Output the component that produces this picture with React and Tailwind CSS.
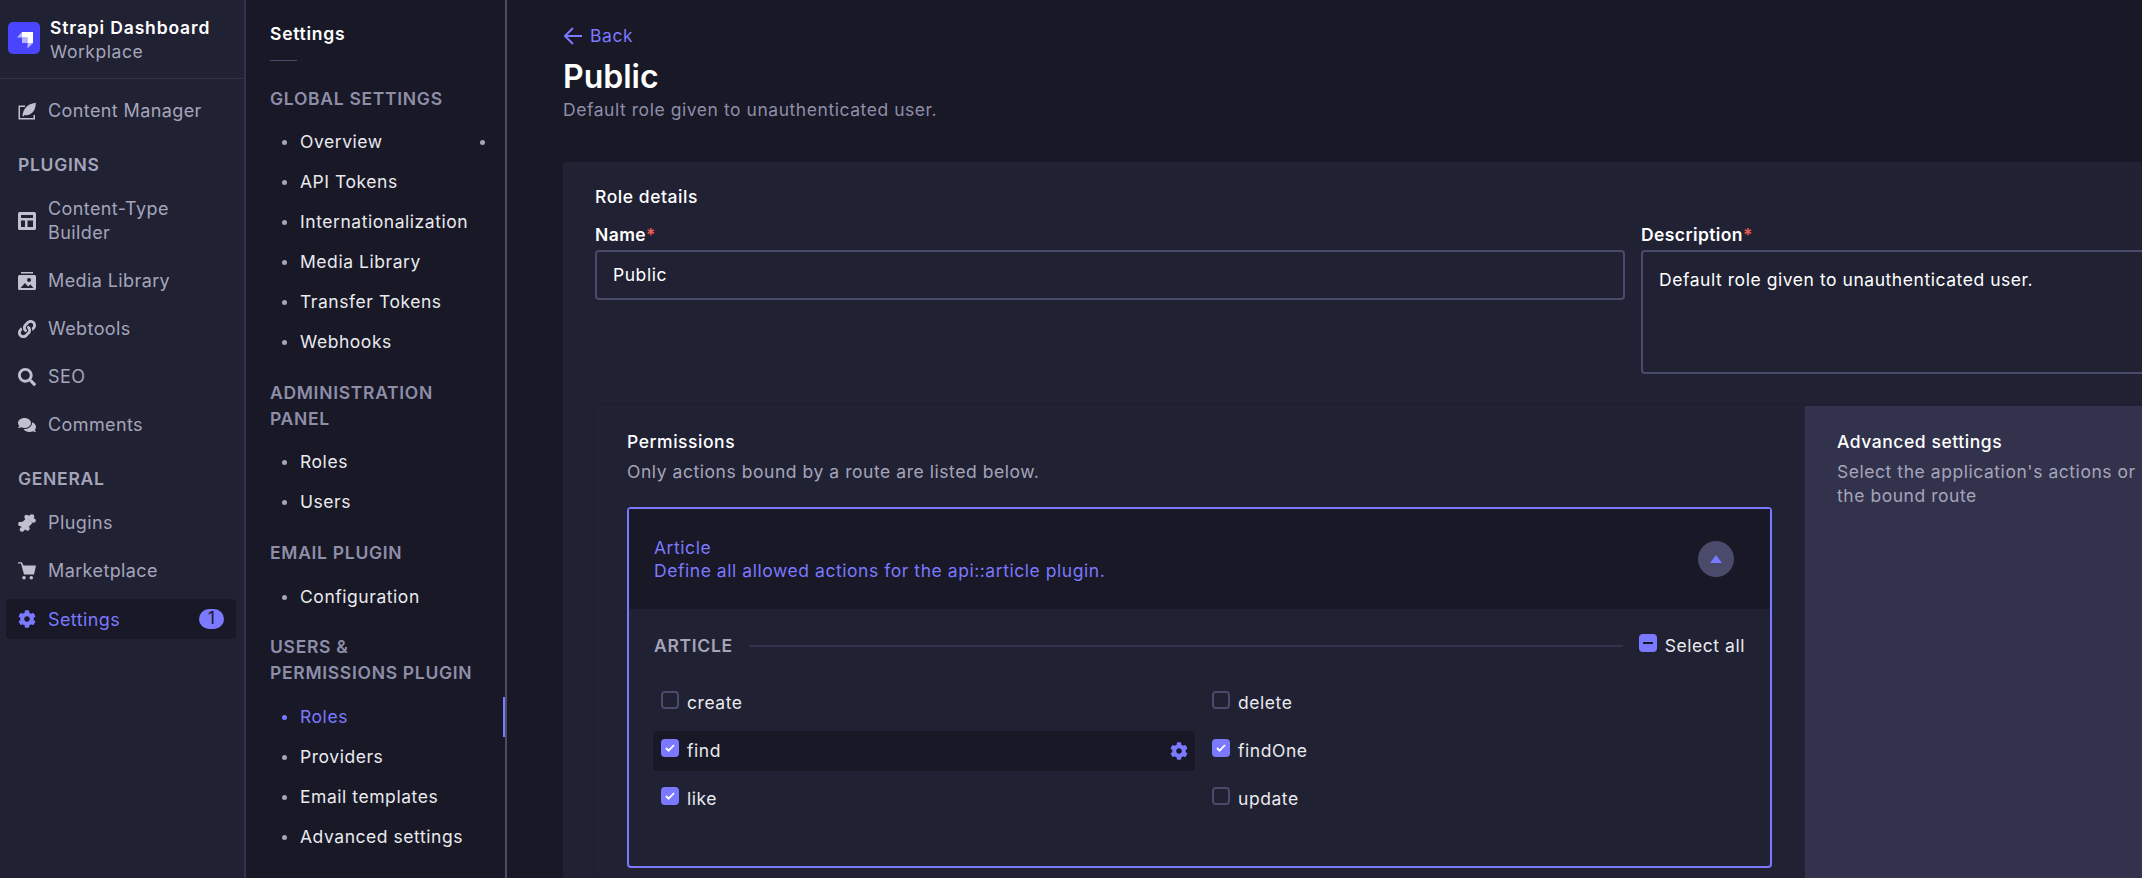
import React from 'react';
import { FaCog, FaComments, FaLink, FaSearch } from 'react-icons/fa';

const WriteIcon = () => (
  <svg viewBox="0 0 18 18" className="w-[18px] h-[18px]" fill="currentColor">
    <path d="M0.500 3.500H7v1.500H2v11h13.500v-3H17v4.500H0.500z" />
    <path d="M4.500 14C4.800 8.500 8 1.800 17.800 0.700 17.800 7 15 13 8 13.200L6 13.200 5.800 14.500z" />
  </svg>
);

const LayoutIcon = () => (
  <svg viewBox="0 0 18 18" className="w-[18px] h-[18px]" fill="currentColor">
    <path fillRule="evenodd" d="M1.500 0h15A1.500 1.500 0 0 1 18 1.500v15a1.500 1.500 0 0 1-1.500 1.500h-15A1.500 1.500 0 0 1 0 16.500v-15A1.500 1.500 0 0 1 1.500 0zM3 3v3h12V3zm0 5.500V15h4V8.500zm6.500 0V15H15V8.500z" />
  </svg>
);

const PictureIcon = () => (
  <svg viewBox="0 0 18 18" className="w-[18px] h-[18px]" fill="currentColor">
    <path d="M3 0h12v1.500H3z" />
    <path fillRule="evenodd" d="M1.500 3h15A1.500 1.500 0 0 1 18 4.500v12a1.500 1.500 0 0 1-1.500 1.500h-15A1.500 1.500 0 0 1 0 16.500v-12A1.500 1.500 0 0 1 1.500 3zM11 6a2 2 0 1 0 0 4 2 2 0 0 0 0-4zM2.500 16h13l-3-3.500-2.500 2-3-3.500z" />
  </svg>
);

const PuzzleIcon = () => (
  <svg viewBox="0 0 18 18" className="w-[18px] h-[18px]" fill="currentColor">
    <path d="M9 3.500l5.500 5.500L9 14.500 3.500 9z" />
    <circle cx="8.500" cy="3" r="2.200" />
    <circle cx="14" cy="2.500" r="2.300" />
    <circle cx="15.500" cy="6.500" r="2.300" />
    <circle cx="2.300" cy="10" r="2.200" />
    <circle cx="4" cy="15.500" r="2.300" />
    <circle cx="9.500" cy="14.500" r="2.200" />
    <path d="M8 2l6-1 2 5-3 2z" />
    <path d="M2 10l3-3 5 7-5 3z" />
  </svg>
);

const CartIcon = () => (
  <svg viewBox="0 0 18 18" className="w-[18px] h-[18px]" fill="currentColor">
    <path d="M0 0.200h3.800L5.500 3.500H18l-2 9H6L3 1.500H0z" />
    <circle cx="6" cy="15.800" r="1.800" />
    <circle cx="13.300" cy="15.800" r="1.800" />
  </svg>
);

const LogoIcon = () => (
  <div className="w-8 h-8 rounded-[5px] bg-[#4945ff] flex items-center justify-center shrink-0">
    <svg viewBox="0 0 32 32" className="w-8 h-8">
      <path d="M14 10h11v11h-5.500v-5.500H14z" fill="#ffffff" />
      <path d="M14 10v5.500H9z" fill="#ffffff" opacity="0.6" />
      <path d="M14 15.500h5.500V21H14z" fill="#ffffff" opacity="0.6" />
      <path d="M19.500 21H25l-5.500 5.500z" fill="#ffffff" opacity="0.6" />
    </svg>
  </div>
);

const Check = ({ checked, minus }) => (
  <span
    className={
      'w-[18px] h-[18px] rounded-[4px] flex items-center justify-center shrink-0 ' +
      (checked || minus ? 'bg-[#7b79ff]' : 'border-2 border-[#4a4a6a]')
    }
  >
    {checked && (
      <svg viewBox="0 0 10 8" className="w-[10px] h-[8px]" fill="none" stroke="#ffffff" strokeWidth="1.800">
        <path d="M1 4l2.600 2.600L9 1" />
      </svg>
    )}
    {minus && <span className="w-[10px] h-[2px] bg-[#181826]"></span>}
  </span>
);

const SideItem = ({ icon, label, tall }) => (
  <div className={'flex items-center gap-3 px-[18px] text-[#a5a5ba] ' + (tall ? 'h-[72px]' : 'h-12')}>
    <span className="w-[18px] flex justify-center shrink-0 text-[#c0c0cf] text-[18px]">{icon}</span>
    <span className="text-[18px] leading-6 w-[170px] tracking-[0.4px]">{label}</span>
  </div>
);

const SideLabel = ({ children }) => (
  <div className="h-[50px] pt-[18px] px-[18px] text-[#a5a5ba] text-[17.500px] leading-6 font-semibold tracking-[0.7px]">
    {children}
  </div>
);

const SubLabel = ({ children, className }) => (
  <div className={'pl-[24px] pr-[28px] text-[#8e8ea9] text-[17.500px] leading-[26px] font-semibold tracking-[0.7px] ' + (className || '')}>
    {children}
  </div>
);

const SubItem = ({ children, active, dot }) => (
  <div className="relative h-10 pl-[36px] pr-[20px] flex items-center gap-[13px]">
    <span className={'w-[5px] h-[5px] rounded-full shrink-0 ' + (active ? 'bg-[#7b79ff]' : 'bg-[#a5a5ba]')}></span>
    <span className={'text-[17.500px] tracking-[0.55px] ' + (active ? 'text-[#7b79ff]' : 'text-[#eaeaef]')}>{children}</span>
    {dot && <span className="absolute right-[20px] w-[5px] h-[5px] rounded-full bg-[#a5a5ba]"></span>}
    {active && <span className="absolute right-0 top-0 w-[2px] h-10 bg-[#7b79ff]"></span>}
  </div>
);

const Action = ({ label, checked, highlight }) => (
  <div className={'h-10 w-[542px] -ml-px rounded-[4px] flex items-center gap-[8px] pl-[8px] pr-[7px] ' + (highlight ? 'bg-[#181826]' : '')}>
    <span className="-mt-[6px]"><Check checked={checked} /></span>
    <span className="text-[#eaeaef] text-[17.500px] tracking-[0.55px] flex-1">{label}</span>
    {highlight && <FaCog className="text-[#7b79ff] text-[18px]" />}
  </div>
);

const ActionRight = ({ label, checked }) => (
  <div className="h-10 flex items-center gap-[8px]">
    <span className="-mt-[6px]"><Check checked={checked} /></span>
    <span className="text-[#eaeaef] text-[17.500px] tracking-[0.55px]">{label}</span>
  </div>
);

const App = () => {
  return (
    <div className="h-screen w-full flex overflow-hidden bg-[#181826] text-white font-['Inter',sans-serif]">
      {/* Main nav */}
      <aside className="w-[246px] shrink-0 bg-[#212134] border-r-2 border-[#32324d]">
        <div className="h-[79px] border-b border-[#32324d] flex items-center gap-[10px] pl-2 pb-[2px]">
          <LogoIcon />
          <div className="mt-[4px]">
            <div className="text-[17.500px] leading-6 font-semibold tracking-[0.85px]">Strapi Dashboard</div>
            <div className="text-[17.500px] leading-6 text-[#a5a5ba] tracking-[0.55px]">Workplace</div>
          </div>
        </div>
        <div className="pt-2">
          <SideItem icon={<WriteIcon />} label="Content Manager" />
          <SideLabel>PLUGINS</SideLabel>
          <SideItem tall icon={<LayoutIcon />} label="Content-Type Builder" />
          <SideItem icon={<PictureIcon />} label="Media Library" />
          <SideItem icon={<FaLink />} label="Webtools" />
          <SideItem icon={<FaSearch />} label="SEO" />
          <SideItem icon={<FaComments />} label="Comments" />
          <SideLabel>GENERAL</SideLabel>
          <SideItem icon={<PuzzleIcon />} label="Plugins" />
          <SideItem icon={<CartIcon />} label="Marketplace" />
          <div className="h-12 flex items-center pl-[6px] pr-[8px]">
            <div className="h-10 w-full rounded-[4px] bg-[#181826] flex items-center gap-3 pl-3 pr-3 text-[#7b79ff]">
              <FaCog className="text-[18px]" />
              <span className="text-[18px] tracking-[0.4px] flex-1">Settings</span>
              <span className="w-[25px] h-5 rounded-[10px] bg-[#7b79ff] text-[#181826] text-[17px] flex items-center justify-center">1</span>
            </div>
          </div>
        </div>
      </aside>

      {/* Settings nav */}
      <nav className="w-[261px] shrink-0 bg-[#181826] border-r-2 border-[#4a4a6a]">
        <div className="pt-[22px] pl-[24px] text-[17.500px] leading-6 font-semibold tracking-[0.75px]">Settings</div>
        <div className="ml-[24px] mt-[14px] w-[27px] h-px bg-[#4a4a6a]"></div>
        <SubLabel className="mt-[25px] mb-[10px]">GLOBAL SETTINGS</SubLabel>
        <SubItem dot>Overview</SubItem>
        <SubItem>API Tokens</SubItem>
        <SubItem>Internationalization</SubItem>
        <SubItem>Media Library</SubItem>
        <SubItem>Transfer Tokens</SubItem>
        <SubItem>Webhooks</SubItem>
        <SubLabel className="mt-[18px] mb-[10px]">ADMINISTRATION PANEL</SubLabel>
        <SubItem>Roles</SubItem>
        <SubItem>Users</SubItem>
        <SubLabel className="mt-[18px] mb-[11px]">EMAIL PLUGIN</SubLabel>
        <SubItem>Configuration</SubItem>
        <SubLabel className="mt-[17px] mb-[11px]">USERS & PERMISSIONS PLUGIN</SubLabel>
        <SubItem active>Roles</SubItem>
        <SubItem>Providers</SubItem>
        <SubItem>Email templates</SubItem>
        <SubItem>Advanced settings</SubItem>
      </nav>

      {/* Page */}
      <main className="flex-1 min-w-0 overflow-hidden pl-[56px]">
        <div className="pt-[24px] flex items-center gap-[8px] text-[#7b79ff] text-[17.500px] leading-6 tracking-[0.6px]">
          <svg viewBox="0 0 18 18" className="w-[18px] h-[18px] ml-px" fill="none" stroke="currentColor" strokeWidth="2">
            <path d="M9 1L1 9l8 8M1 9h17" />
          </svg>
          <span>Back</span>
        </div>
        <h1 className="mt-[9px] text-[32px] leading-[40px] font-semibold">Public</h1>
        <p className="mt-[1px] text-[#8e8ea9] text-[17.500px] leading-6 tracking-[0.55px]">Default role given to unauthenticated user.</p>

        <section className="mt-[40px] w-[1800px] bg-[#212134] rounded-[4px] pl-[32px] pt-[23px]">
          <h2 className="text-[17.500px] leading-6 font-medium tracking-[0.55px]">Role details</h2>
          <div className="mt-[14px] flex gap-[16px]">
            <div className="w-[1030px]">
              <label className="block text-[17.500px] leading-6 font-semibold tracking-[0.4px]">Name<span className="text-[#ee5e52]">*</span></label>
              <div className="mt-[3px] h-[50px] rounded-[4px] border-2 border-[#4a4a6a] flex items-center pl-[16px] text-[17.500px] tracking-[0.55px]">Public</div>
            </div>
            <div className="flex-1">
              <label className="block text-[17.500px] leading-6 font-semibold tracking-[0.4px]">Description<span className="text-[#ee5e52]">*</span></label>
              <div className="mt-[3px] h-[124px] rounded-[4px] border-2 border-[#4a4a6a] pl-[16px] pt-[16px] text-[17.500px] leading-6 tracking-[0.55px]">Default role given to unauthenticated user.</div>
            </div>
          </div>

          <div className="mt-[32px] flex shadow-[0_0_4px_rgba(0,0,0,0.15)]">
            <div className="w-[1210px] shrink-0 bg-[#212134] pl-[32px] pr-[33px] pt-[24px] pb-[40px]">
              <h3 className="text-[17.500px] leading-6 font-medium tracking-[0.55px]">Permissions</h3>
              <p className="mt-[6px] text-[#a5a5ba] text-[17.500px] leading-6 tracking-[0.55px]">Only actions bound by a route are listed below.</p>
              <div className="mt-[23px] h-[361px] rounded-[4px] border-2 border-[#7b79ff]">
                <div className="h-[100px] bg-[#181826] flex items-center justify-between pl-[25px] pr-[36px]">
                  <div className="text-[#7b79ff] text-[17.500px] leading-[23px] tracking-[0.55px]">
                    <div>Article</div>
                    <div>Define all allowed actions for the api::article plugin.</div>
                  </div>
                  <span className="w-9 h-9 rounded-full bg-[#4a4a6a] flex items-center justify-center">
                    <svg viewBox="0 0 12 8" className="w-3 h-2" fill="#7b79ff"><path d="M6 0l6 8H0z" /></svg>
                  </span>
                </div>
                <div className="pl-[25px] pr-[25px]">
                  <div className="h-[74px] flex items-center gap-[16px]">
                    <span className="text-[#a5a5ba] text-[17.500px] font-semibold tracking-[0.7px]">ARTICLE</span>
                    <span className="flex-1 h-[2px] bg-[#32324d]"></span>
                    <span className="flex items-center gap-[8px]">
                      <span className="-mt-[6px]"><Check minus /></span>
                      <span className="text-[#eaeaef] text-[17.500px] tracking-[0.55px]">Select all</span>
                    </span>
                  </div>
                  <div className="flex">
                    <div className="w-[558px] flex flex-col gap-2">
                      <Action label="create" />
                      <Action label="find" checked highlight />
                      <Action label="like" checked />
                    </div>
                    <div className="flex flex-col gap-2">
                      <ActionRight label="delete" />
                      <ActionRight label="findOne" checked />
                      <ActionRight label="update" />
                    </div>
                  </div>
                </div>
              </div>
            </div>
            <div className="flex-1 bg-[#32324d] pl-[32px] pt-[24px]">
              <h3 className="text-[17.500px] leading-6 font-medium tracking-[0.55px]">Advanced settings</h3>
              <p className="mt-[6px] w-[310px] text-[#a5a5ba] text-[17.500px] leading-6 tracking-[0.55px]">Select the application's actions or the bound route</p>
            </div>
          </div>
        </section>
      </main>
    </div>
  );
};

export default App;
